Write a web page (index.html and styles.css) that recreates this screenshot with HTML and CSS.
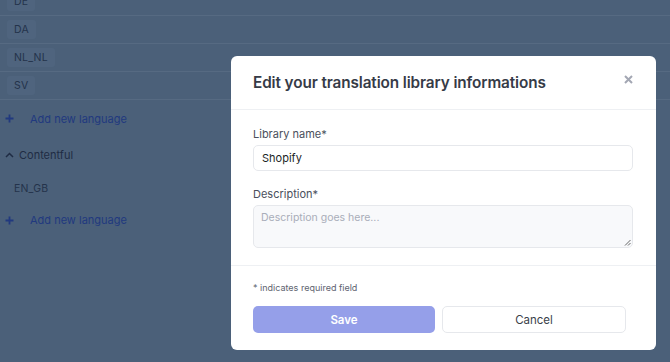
FILE: index.html
```html
<!DOCTYPE html>
<html lang="en">
<head>
<meta charset="utf-8">
<title>Edit translation library</title>
<link rel="stylesheet" href="styles.css">
</head>
<body>
<div class="page">
  <div class="lang-row"><span class="tag">DE</span></div>
  <div class="lang-row"><span class="tag">DA</span></div>
  <div class="lang-row"><span class="tag">NL_NL</span></div>
  <div class="lang-row"><span class="tag">SV</span></div>
  <div class="add-row">
    <svg class="plus" width="9" height="9" viewBox="0 0 9 9"><path d="M4.5 0.5v8M0.5 4.5h8" stroke="currentColor" stroke-width="1.8" fill="none"/></svg>
    <span>Add new language</span>
  </div>
  <div class="group-row">
    <svg class="chev" width="9" height="6" viewBox="0 0 9 6"><path d="M1 5l3.5-3.5L8 5" stroke="currentColor" stroke-width="1.5" fill="none"/></svg>
    <span>Contentful</span>
  </div>
  <div class="lang-row lang-row-plain"><span class="tag tag-plain">EN_GB</span></div>
  <div class="add-row add-row-last">
    <svg class="plus" width="9" height="9" viewBox="0 0 9 9"><path d="M4.5 0.5v8M0.5 4.5h8" stroke="currentColor" stroke-width="1.8" fill="none"/></svg>
    <span>Add new language</span>
  </div>
</div>

<div class="modal">
  <div class="modal-header">
    <h2 class="modal-title">Edit your translation library informations</h2>
    <svg class="close" width="9" height="9" viewBox="0 0 9 9"><path d="M1 1l7 7M8 1l-7 7" stroke="currentColor" stroke-width="2" fill="none"/></svg>
  </div>
  <div class="modal-body">
    <label class="label">Library name*</label>
    <div class="input">Shopify</div>
    <label class="label label-gap">Description*</label>
    <div class="textarea">
      <span class="placeholder">Description goes here...</span>
      <svg class="grip" width="7" height="7" viewBox="0 0 7 7"><path d="M6.5 1L1 6.5M6.5 4L4 6.5" stroke="#555" stroke-width="0.9" fill="none"/></svg>
    </div>
  </div>
  <div class="modal-footer">
    <p class="note">* indicates required field</p>
    <div class="buttons">
      <button class="btn btn-save">Save</button>
      <button class="btn btn-cancel">Cancel</button>
    </div>
  </div>
</div>
</body>
</html>
```

FILE: styles.css
```css
* { box-sizing: border-box; }
html, body { margin: 0; padding: 0; }
body {
  width: 670px;
  height: 362px;
  overflow: hidden;
  background: #4b6079;
  font-family: Inter, "Noto Sans", sans-serif;
  position: relative;
}
.page {
  display: flex;
  flex-direction: column;
  margin-top: -12px;
}
.lang-row {
  height: 28px;
  display: flex;
  align-items: center;
  padding-left: 7px;
  border-bottom: 1px solid #566a82;
}
.tag {
  font-size: 10.5px;
  color: #24334b;
  background: #4f647e;
  padding: 3px 7px;
  border-radius: 3px;
  letter-spacing: 0.2px;
}
.lang-row-plain {
  border-bottom: none;
  height: 30px;
}
.tag-plain { background: transparent; }
.add-row {
  display: flex;
  align-items: center;
  height: 37px;
  padding-left: 5px;
  color: #21397f;
  font-size: 11px;
}
.add-row-last { height: 34px; }
.plus { margin-right: 16px; }
.group-row {
  display: flex;
  align-items: center;
  height: 36px;
  padding-left: 5px;
  color: #1f2c44;
  font-size: 11px;
}
.chev { margin-right: 5px; }

.modal {
  position: absolute;
  left: 231px;
  top: 56px;
  width: 425px;
  height: 294px;
  background: #fff;
  border-radius: 6px;
  display: flex;
  flex-direction: column;
}
.modal-header {
  height: 54px;
  border-bottom: 1px solid #eef0f3;
  display: flex;
  align-items: center;
  justify-content: space-between;
  padding: 0 23px 0 22px;
}
.modal-title {
  margin: 0;
  font-size: 15.3px;
  font-weight: 600;
  color: #363b47;
  letter-spacing: -0.1px;
}
.close { color: #a3a7b3; margin-top: -7px; }
.modal-body {
  padding: 17px 23px 17px 22px;
  display: flex;
  flex-direction: column;
  border-bottom: 1px solid #eef0f3;
}
.label {
  font-size: 11px;
  color: #4a4f5c;
  line-height: 14px;
  margin-bottom: 4px;
}
.label-gap { margin-top: 16px; }
.input {
  height: 26px;
  border: 1px solid #e6e8ec;
  border-radius: 5px;
  padding: 0 8px;
  display: flex;
  align-items: center;
  font-size: 11px;
  color: #1c1f26;
}
.textarea {
  position: relative;
  height: 43px;
  border: 1px solid #e6e8ec;
  border-radius: 5px;
  background: #f8f9fb;
  padding: 5px 7px;
  font-size: 10.5px;
}
.placeholder { color: #a9adb9; }
.grip { position: absolute; right: 1px; bottom: 1px; }
.modal-footer {
  padding: 16px 30px 17px 22px;
  display: flex;
  flex-direction: column;
}
.note {
  margin: 0 0 12px;
  font-size: 9px;
  color: #5e6370;
  line-height: 12px;
}
.buttons {
  display: flex;
  gap: 7px;
}
.btn {
  flex: 1;
  height: 27px;
  border-radius: 5px;
  font-family: inherit;
  font-size: 11.5px;
}
.btn-save {
  background: #959fe9;
  border: none;
  color: #fff;
  font-weight: 600;
}
.btn-cancel {
  background: #fff;
  border: 1px solid #e6e8ec;
  color: #3b3f4a;
}
```
